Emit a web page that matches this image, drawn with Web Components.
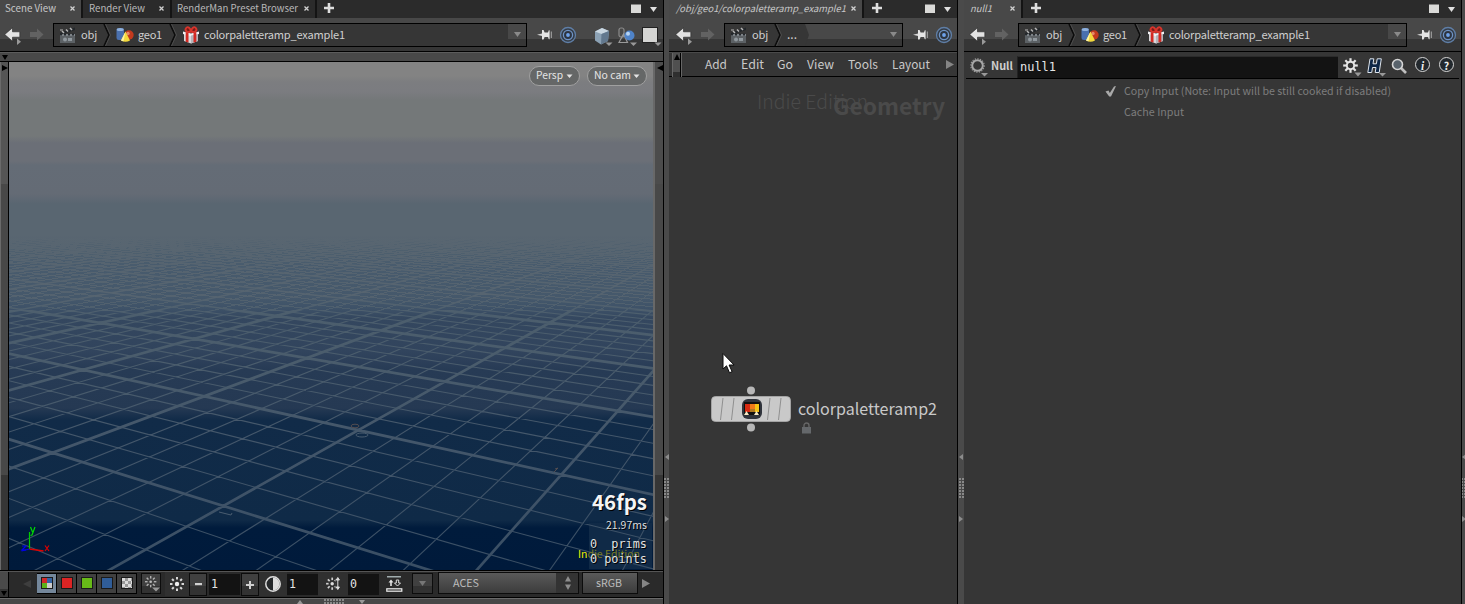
<!DOCTYPE html>
<html lang="en">
<head>
<meta charset="utf-8">
<title>Scene editor</title>
<style>
  html, body { margin: 0; height: 100%; overflow: hidden; background: #363636; }
  body { font-family: "Noto Sans CJK SC", "Noto Sans", sans-serif; color: #c6c6c6; }
</style>
</head>
<body>
<scene-desktop></scene-desktop>
<script>
function define(name, css, html, ready) {
  const t = document.createElement('template');
  t.innerHTML = '<style>:host{display:block;box-sizing:border-box}*{box-sizing:border-box}svg{display:block}' + css + '</style>' + html;
  customElements.define(name, class extends HTMLElement {
    constructor() { super(); this.attachShadow({ mode: 'open' }).appendChild(t.content.cloneNode(true)); }
    connectedCallback() { if (ready) ready(this, this.shadowRoot); }
  });
}

/* ---------- label whose type is fitted to a known width ---------- */
define('ui-label', ':host{white-space:pre;flex:none;line-height:1;display:block;padding-bottom:2px}span{display:inline-block;line-height:16px}', '<span><slot></slot></span>', (el, r) => {
  const w = +el.getAttribute('w'), x = el.getAttribute('x'), size = +(el.getAttribute('size') || 12);
  el.style.fontSize = size + 'px';
  if (x) el.style.marginLeft = x + 'px';
  if (w) {
    el.style.width = w + 'px';
    const s = r.querySelector('span'), n = el.textContent.length;
    const now = s.getBoundingClientRect().width;
    if (now > w) el.style.fontSize = Math.max(size * .85, size * w / now).toFixed(2) + 'px';
    s.style.letterSpacing = ((w - s.getBoundingClientRect().width) / n).toFixed(3) + 'px';
  }
});

/* ---------- icons ---------- */
const rays = (n, a, b, c) => Array.from({ length: n }, (_, i) => {
  const t = i * 2 * Math.PI / n;
  return `<line x1="${c + a * Math.cos(t)}" y1="${c + a * Math.sin(t)}" x2="${c + b * Math.cos(t)}" y2="${c + b * Math.sin(t)}"/>`;
}).join('');
const ICONS = {
  back: [18, 18, '<path d="M-.3 7.500 7.500.8v4h7.300v5.400H7.500v4z" fill="#e2e2e2" stroke="#222" stroke-width=".6"/><path d="M12 11.500v6.500l4-3.200z" fill="#999"/>'],
  forward: [16, 16, '<path d="M14.500 7.500 8 1.500v3.500H1v5h7v3.500z" fill="#626262"/>'],
  clap: [18, 18, '<rect x="1" y="8" width="15" height="9" fill="#5c6165"/><rect x="1" y="8" width="15" height="2" fill="#7d8388"/><path d="M1 7 16 1.500V4L1 9z" fill="#22262a"/><path d="M3 5l2 2M7 3.500l2 2M11 2l2 2" stroke="#b5b5b5" stroke-width="1.500"/><path d="M1 8.500h15" stroke="#24282c" stroke-width="2" stroke-dasharray="2 2"/><circle cx="6" cy="13.500" r="2" fill="#8f979d"/><rect x="9" y="12" width="4" height="3" fill="#8f979d"/><path d="M1 3h3v2H1z" fill="#777"/>'],
  geo: [18, 16, '<rect x=".5" y="1" width="7.500" height="12" rx="2.500" fill="#4a70ae"/><ellipse cx="4.200" cy="2.500" rx="3.500" ry="1.500" fill="#8fb0dc"/><circle cx="13" cy="8" r="4.700" fill="#c23a1e"/><circle cx="12" cy="6.500" r="1.700" fill="#e58a6a"/><path d="M9.500 4.500 14 13.500q-4.500 2.500-9 0z" fill="#f3d93c"/><path d="M9.500 4.500 7.500 14.300q-1.500 0-2.500-.8z" fill="#fff4a2"/>'],
  gift: [18, 18, '<path d="M2 7.500 9 9l7-1.500V15L9 17.500 2 15z" fill="#d9d9dc"/><path d="M1 5.500 9 7.500l8-2v2.500l-8 2.200L1 8z" fill="#f1f1f3"/><path d="M9 9.500v8l7-2.500V8z" fill="#b4b4ba"/><path d="M3.700 6.100 6.500 6.800v9.700L3.700 15.700zM11.500 6.800 14.300 6.100v9.600l-2.800.8z" fill="#d32a23"/><path d="M9 5.500C5 7 2.500 4.500 4 2.200 6-.5 8.500 2.500 9 5.500c.5-3 3-6 5-3.300 1.500 2.300-1 4.800-5 3.300z" fill="#7a1c18" stroke="#d8352c" stroke-width="1.900"/>'],
  pin: [16, 14, '<path d="M0 6.700 6 5.200v3z" fill="#d8d8d8"/><path d="M5 2h1.600L7.600 4.500H11l.8-2.300h.8v9h-.8L11 9H7.600l-1 2.500H5z" fill="#e6e6e6"/><path d="M14.300 3.500v6.500" stroke="#aaa" stroke-width="1"/>'],
  ring: [18, 18, '<circle cx="9" cy="9" r="7.500" fill="#343c46" stroke="#5f7ea6" stroke-width="1.300"/><circle cx="9" cy="9" r="4.600" fill="#2c3440" stroke="#6f93c4" stroke-width="1.300"/><circle cx="9" cy="9" r="1.900" fill="#6ea2ea"/>'],
  cube: [20, 20, '<path d="M1 4.500 8 1l7 3-1 10-7 3.500-6-4z" fill="#8ba1b4"/><path d="M1 4.500 8 1l7 3-7.500 3z" fill="#c9d6e0"/><path d="M7.500 7 15 4l-1 10-7 3.500z" fill="#62788e"/><path d="M11.500 15.500h7l-3.500 3.500z" fill="#999"/>'],
  shapes: [20, 20, '<rect x="1" y="1" width="5" height="9" rx="2" fill="none" stroke="#8b8b8b" stroke-width="1.200"/><path d="M5.500 7 9.500 15.500H1z" fill="none" stroke="#999" stroke-width="1.200"/><circle cx="11.500" cy="8.500" r="5" fill="#4f83c8"/><circle cx="10" cy="6.800" r="2" fill="#b5d3f3"/><path d="M12 15.500h7l-3.500 3.500z" fill="#999"/>'],
  square: [20, 20, '<rect x=".5" y=".5" width="15" height="15" fill="#d6d6d4" stroke="#222"/><path d="M12.500 15.500h7L16 19z" fill="#999"/>'],
  win: [10, 10, '<rect width="10" height="8.500" y=".5" fill="#dadad8"/>'],
  plus: [10, 12, '<path d="M3.700 0h2.600v3.700H10v2.600H6.300V10H3.700V6.300H0V3.700h3.700z" fill="#dedede"/>'],
  close: [5, 7, '<path d="M.5.5l4 4M4.500.5l-4 4" stroke="#d0d0d0" stroke-width="1.300"/>'],
  down: [7, 5, '<path d="M0 0h7L3.500 5z" fill="currentColor"/>'],
  caret: [7, 5, '<path d="M.5.500h6L3.500 4z" fill="currentColor"/>'],
  right: [8, 9, '<path d="M0 0v9l8-4.500z" fill="currentColor"/>'],
  left: [8, 8, '<path d="M8 0v8L0 4z" fill="currentColor"/>'],
  param: [19, 19, '<circle cx="7.500" cy="7.500" r="5.300" fill="none" stroke="#a8a8a8" stroke-width="2"/><circle cx="7.500" cy="7.500" r="6.700" fill="none" stroke="#999" stroke-width="1.200" stroke-dasharray="1.300 1.300"/><path d="M11 15h7l-3.500 3.500z" fill="#999"/>'],
  cog: [19, 19, `<g stroke="#e6e6e6" stroke-width="2.200">${rays(8, 3.500, 7.300, 7.500)}</g><circle cx="7.500" cy="7.500" r="3.700" fill="none" stroke="#e6e6e6" stroke-width="2"/><path d="M11.500 14.500h7L15 18.500z" fill="#999"/>`],
  hou: [19, 19, '<path d="M3 .8H6.800L6 5.800h3.400l.8-5H14.300L12.200 14.500H8.200l.8-5H5.500l-.8 5H.8z" fill="#0d2646" stroke="#dfe6ee" stroke-width="1"/><path d="M12 15h7l-3.500 3.500z" fill="#999"/>'],
  mag: [17, 17, '<path d="M10 10l5 5" stroke="#bfbfbf" stroke-width="2.600"/><circle cx="6.500" cy="6.500" r="5" fill="#59636c" stroke="#d6d6d6" stroke-width="1.600"/>'],
  sun: [16, 16, `<g stroke="#d8d8d8" stroke-width="2">${rays(8, 4.500, 7, 8)}</g><circle cx="8" cy="8" r="2.200" fill="#eee"/>`],
  light: [16, 18, `<g stroke="#b2b2b2" stroke-width="1.600" transform="translate(-.5 -.5) scale(.9)">${rays(8, 3.500, 6.300, 8)}</g><circle cx="6.700" cy="6.700" r="1.300" fill="#bbb"/><path d="M8 12.500h8l-4 4z" fill="#999"/>`],
  contrast: [18, 18, '<circle cx="9" cy="9" r="7.200" fill="#25282a" stroke="#dedede" stroke-width="1.500"/><path d="M9 2.500a6.500 6.500 0 010 13z" fill="#dedede"/>'],
  gamma: [16, 16, `<g stroke="#d0d0d0" stroke-width="1.900" transform="translate(0 .5) scale(.9)">${rays(8, 4, 6.800, 8)}</g><circle cx="7.200" cy="7.700" r="1.700" fill="#ddd"/><path d="M10.500 0h6v16h-6z" fill="#303030"/><path d="M12.800 3v9M11.200 4l1.600-2.500L14.400 4zM11.200 11l1.600 2.500 1.600-2.500z" stroke="#ddd" stroke-width="1" fill="#ddd"/>`],
  fit: [17, 16, '<path d="M1 .8h14" stroke="#bfcdd0" stroke-width="1.200"/><path d="M4.200 10V6.500H2.500L5 3.500l2.500 3H5.800V10z" fill="#e4e4e4"/><path d="M10.300 4h2.400v3h1.800l-3 3-3-3h1.800z" fill="none" stroke="#ddd" stroke-width="1"/><rect x=".8" y="12.800" width="15" height="2.400" fill="#333" stroke="#eee" stroke-width="1.200"/>'],
  minus: [7, 3, '<path d="M0 0h7v2.200H0z" fill="#d0d0d0"/>'],
  add: [8, 8, '<path d="M3 0h2v3h3v2H5v3H3V5H0V3h3z" fill="#d0d0d0"/>'],
  updown: [8, 14, '<path d="M1 5.500h6L4 0zM1 8.500h6L4 14z" fill="#8d8d8d"/>'],
  check: [12, 14, '<path d="M.5 6.500 3.500 5.500 4.800 8 9 1.500l2-.5L6 11.500H4.200z" fill="#a9a9a9"/>'],
  chev: [8, 22, '<path d="M1 0 6 11 1 22" fill="none" stroke="#0c0c0c" stroke-width="1.600"/><path d="M2.500 0 7.500 11 2.500 22" fill="none" stroke="#4c4c4c" stroke-width="1"/>']
};
define('ui-icon', ':host{flex:none}', '', (el, r) => {
  const [w, h, s] = ICONS[el.getAttribute('name')];
  const x = el.getAttribute('x'), y = el.getAttribute('y');
  if (x) el.style.marginLeft = x + 'px';
  if (y) el.style.marginTop = y + 'px';
  el.style.width = w + 'px'; el.style.height = h + 'px';
  const b = document.createElement('div');
  b.innerHTML = `<svg width="${w}" height="${h}" viewBox="0 0 ${w} ${h}" overflow="visible">${s}</svg>`;
  r.appendChild(b);
});

/* ---------- tabs ---------- */
define('pane-tabs', ':host{display:flex;align-items:center;height:18px;background:#2b2b2b}.end{margin-left:auto;display:flex;align-items:center;padding:0 6px 0 0;gap:9px;color:#e0e0e0}',
  '<slot></slot><div class="end"><ui-icon name="win"></ui-icon><ui-icon name="down"></ui-icon></div>');
define('pane-tab', `:host{display:flex;align-items:center;height:18px;border-right:2px solid #141414;padding-right:6px;color:#b9b9b9;flex:none}
  :host([active]){background:#484848;color:#c8c8c8}ui-icon{margin-left:auto}`,
  '<slot></slot><ui-icon name="close"></ui-icon>', el => { el.style.width = el.getAttribute('w') + 'px'; });

/* ---------- network path bar ---------- */
define('path-bar', `:host{display:flex;height:34px;background:linear-gradient(#484848 21px,#363636 21px);border-bottom:1px solid #000;flex:none}
  .box{border:1px solid #000;height:24px;margin-top:5px;display:flex;align-items:center;background:linear-gradient(#484848 15px,#363636 15px);flex:none;color:#cfcfcf}
  .segs{display:flex;align-items:center;background:#363636;height:22px}
  :host([short]) .segs{clip-path:polygon(0 0,calc(100% - 4px) 0,100% 50%,calc(100% - 4px) 100%,0 100%)}
  .dd{width:18px;height:22px;margin-left:auto;display:grid;place-items:center;color:#8a8a8a;padding-bottom:1px}`,
  '<ui-icon name="back" id="b" y="9"></ui-icon><ui-icon name="forward" x="6" y="9"></ui-icon><div class="box"><div class="segs"><slot></slot></div><div class="dd"><ui-icon name="down"></ui-icon></div></div><ui-icon name="pin" x="10" y="10"></ui-icon><ui-icon name="ring" x="6" y="8"></ui-icon><slot name="tools"></slot>',
  (el, r) => {
    const s = +el.getAttribute('start');
    r.querySelector('#b').style.marginLeft = s + 'px';
    const box = r.querySelector('.box');
    box.style.width = el.getAttribute('box') + 'px'; box.style.marginLeft = '8px';
    r.querySelector('.segs').style.width = el.getAttribute('segs') + 'px';
  });

/* ---------- splitter ---------- */
define('pane-splitter', `:host{border-left:1px solid #000;background:#4a4a4a;display:flex;flex-direction:column;align-items:center;padding-top:454px;overflow:hidden}
  .dots{width:5px;height:21px;margin:18px 0 17px;background:radial-gradient(circle at 1px 1px,#8a8a8a .7px,transparent 1px) 0 0/3px 3px;flex:none}svg{flex:none}`,
  '<svg width="4" height="6"><path d="M4 0v6L0 3z" fill="#8c8c8c"/></svg><div class="dots"></div><svg width="4" height="6"><path d="M0 0v6l4-3z" fill="#8c8c8c"/></svg>');

/* ---------- perspective construction plane ---------- */
function solve(A, b) {
  const n = b.length;
  for (let i = 0; i < n; i++) {
    let p = i; for (let k = i + 1; k < n; k++) if (Math.abs(A[k][i]) > Math.abs(A[p][i])) p = k;
    [A[i], A[p]] = [A[p], A[i]]; [b[i], b[p]] = [b[p], b[i]];
    for (let k = i + 1; k < n; k++) { const f = A[k][i] / A[i][i]; for (let j = i; j < n; j++) A[k][j] -= f * A[i][j]; b[k] -= f * b[i]; }
  }
  const x = Array(n).fill(0);
  for (let i = n - 1; i >= 0; i--) { let s = b[i]; for (let j = i + 1; j < n; j++) s -= A[i][j] * x[j]; x[i] = s / A[i][i]; }
  return x;
}
/* grid unit -> viewport pixel correspondences */
const NODES = [[0, 0, 350.3, 368], [1, 0, 552, 413], [-1, 0, 194.3, 334], [-2, 0, 74.3, 308], [0, -1, 214.3, 444], [-1, -1, 43.7, 390.7], [0, 1, 436, 319.7], [1, 1, 608.7, 348.7]];
function planeLines() {
  const N = Array.from({ length: 8 }, () => Array(8).fill(0)), v = Array(8).fill(0);
  for (const [x, y, X, Y] of NODES)
    for (const [row, t] of [[[x, y, 1, 0, 0, 0, -x * X, -y * X], X], [[0, 0, 0, x, y, 1, -x * Y, -y * Y], Y]])
      for (let i = 0; i < 8; i++) { v[i] += row[i] * t; for (let j = 0; j < 8; j++) N[i][j] += row[i] * row[j]; }
  const h = solve(N, v);
  const P = (x, y) => [h[0] * x + h[1] * y + h[2], h[3] * x + h[4] * y + h[5], h[6] * x + h[7] * y + 1];
  let minor = '', major = '';
  const seg = (a, b) => {
    const e = .02;
    if (a[2] < e && b[2] < e) return '';
    const cut = (p, q) => { const t = (e - p[2]) / (q[2] - p[2]); return p.map((c, i) => c + t * (q[i] - c)); };
    if (a[2] < e) a = cut(a, b); if (b[2] < e) b = cut(b, a);
    return `M${(a[0] / a[2]).toFixed(1)} ${(a[1] / a[2]).toFixed(1)}L${(b[0] / b[2]).toFixed(1)} ${(b[1] / b[2]).toFixed(1)}`;
  };
  const R = 22;
  for (let i = -R * 5; i <= R * 5; i++) {
    const c = i / 5, d = seg(P(c, -R), P(c, R)) + seg(P(-R, c), P(R, c));
    if (i % 5) minor += d; else major += d;
  }
  return [minor, major];
}
define('scene-viewport', `:host{position:relative;flex:1;overflow:hidden;height:508px;color:#eee;
    background:linear-gradient(#838383 0,#838383 14px,#7c7d80 20px,#7b7c80 30px,#747879 38px,#747879 74px,#6b6f77 81px,#6b6f77 99px,#646c76 103px,#646b75 132px,#596671 142px,#596671 174px,#4f606e 186px,#485b6d 205px,#45586b 236px,#3e5268 246px,#34475f 256px,#31445d 290px,#273b55 308px,#253953 346px,#112b48 358px,#0f2a47 458px,#001b3c 466px,#001a3b 100%)}
  .plane{position:absolute;inset:0}
  .shade{position:absolute;right:1px;bottom:1px;width:63px;height:46px;background:#102a47}
  .pills{position:absolute;right:6px;top:4px;display:flex;gap:7px}
  .pill{height:20px;border:1.500px solid #a0a0a0;border-radius:10px;background:#656767;display:flex;align-items:center;color:#e4e4e4;justify-content:space-between;padding:0 6px 0 6px}
  .hud{position:absolute;right:6px;bottom:3px;display:flex;flex-direction:column;align-items:flex-end;text-shadow:1px 1px 0 #000}
  .hud ui-label,.mark ui-label{padding-bottom:0}
  .fps{font-weight:700;color:#f4f4f4;margin-bottom:6px}.ms{margin-bottom:4px;color:#ddd}
  .mono{font-family:"DejaVu Sans Mono",monospace;color:#e2e2e2;margin-top:-1px}
  .mark{position:absolute;left:569px;bottom:8px;color:#7b7c20}.mark b{font-weight:400;color:#f0f000}`,
  `<div class="shade"></div><svg class="plane" width="645" height="508"></svg>
  <div class="pills"><div class="pill" style="width:51px"><ui-label w="27" size="12">Persp</ui-label><ui-icon name="caret"></ui-icon></div><div class="pill" style="width:60px"><ui-label w="37" size="12">No cam</ui-label><ui-icon name="caret"></ui-icon></div></div>
  <div class="mark"><ui-label w="62" size="11"><b>In</b>die Edition</ui-label></div>
  <div class="hud"><ui-label class="fps" w="55" size="22">46fps</ui-label><ui-label class="ms" w="41" size="12">21.97ms</ui-label>
  <ui-label class="mono" w="57" size="12">0  prims</ui-label><ui-label class="mono" w="57" size="12">0 points</ui-label></div>`,
  (el, r) => {
    const [minor, major] = planeLines();
    r.querySelector('.plane').innerHTML = `<defs><linearGradient id="g" x1="0" y1="0" x2="0" y2="508" gradientUnits="userSpaceOnUse"><stop offset=".33" stop-color="#596671"/><stop offset=".46" stop-color="#566470"/><stop offset=".5" stop-color="#4c5e6d"/><stop offset=".6" stop-color="#4a5c6c"/><stop offset=".75" stop-color="#43566a"/><stop offset="1" stop-color="#394e64"/></linearGradient>
      <clipPath id="far"><path d="M0 176h645v72H0z"/></clipPath><clipPath id="near"><path d="M0 248h645v260H0z"/></clipPath></defs>
      <g fill="none" stroke="url(#g)"><g clip-path="url(#far)" shape-rendering="crispEdges"><path d="${minor}" stroke-width=".9"/></g><g clip-path="url(#near)"><path d="${minor}" stroke-width="1.100"/></g><g clip-path="url(#far)"><path d="${major}" stroke-width="1.500"/></g><g clip-path="url(#near)"><path d="${major}" stroke-width="2.700"/></g></g>
      <g fill="none" stroke="#514c50"><ellipse cx="346" cy="364" rx="4" ry="1.800"/><path d="M545 410l4-4-3 1"/></g>
      <g fill="none" stroke="#4a5d70"><ellipse cx="353" cy="373" rx="6" ry="2"/><path d="M210 450l12 3 1-2M215 452"/></g>
      <g fill="none" stroke-width="1.200"><path d="M20.500 487v-17" stroke="#0c0"/><path d="M20.500 487l14 2" stroke="#d00" stroke-width="1.700"/><path d="M20.500 487l-8 2" stroke="#00e"/>
      <path d="M21.500 465l2 5M26 465l-3 8-1.500.5" stroke="#0d0"/><path d="M36 483.500l4 5.500M40 483.500l-4 5.500" stroke="#d00"/><path d="M13 484h4l-4 4h4" stroke="#00e"/></g>`;
  });

/* ---------- viewport frame with stow bars ---------- */
define('viewport-frame', `:host{display:flex;flex-direction:column;height:519px}
  .top{height:10px;background:#484848;border-top:1px solid #5c5c5c;border-bottom:1px solid #000;padding:2px 0 0 2px;color:#000}
  .row{display:flex;height:509px;border-bottom:1px solid #000}
  .bar{width:9px;flex:none;background:linear-gradient(#555 122px,#484848 122px,#484848 413px,#363636 413px);color:#000;padding-top:3px}
  .l{border-right:1px solid #000;border-left:1px solid #6a6a6a;padding-left:1px}.r{width:10px;border-left:2px solid #686868;padding-left:2px;background:linear-gradient(#4c4c4c 122px,#484848 122px,#484848 413px,#363636 413px)}`,
  '<div class="top"><svg width="6" height="5"><path d="M0 0h6L3 5z"/></svg></div><div class="row"><div class="bar l"><svg width="6" height="6"><path d="M0 0v6l6-3z"/></svg></div><slot></slot><div class="bar r"><svg width="6" height="6"><path d="M6 0v6L0 3z"/></svg></div></div>');

/* ---------- display options bar ---------- */
define('display-bar', `:host{display:flex;height:27px;background:#2a2a2a;border-bottom:1px solid #000;border-top:1px solid #555}
  .stow{width:9px;border-right:1px solid #000;background:linear-gradient(#4a4a4a 17px,#333 17px);display:flex;align-items:flex-end;padding:0 0 1px 1px;flex:none}
  .ch{display:flex;height:21px;margin:1px 0 0 6px;border:1px solid #000;border-left:0}
  .c{width:20px;display:grid;place-items:center;background:#404040;border-right:1px solid #000;padding-bottom:1px}.c:last-child{border:0;width:19px}
  .c.on{background:#74879b}.c i{width:12px;height:12px;border:1px solid #1a1a1a}
  .b{border:1px solid #0c0c0c;background:linear-gradient(#404040 12px,#323232 12px);display:grid;place-items:center;flex:none}
  .f{width:31px;height:21px;background:#131313;margin-top:2px;display:flex;align-items:center;padding:1px 0 0 2px;font-family:"DejaVu Sans Mono",monospace;color:#e4e4e4;flex:none}
  .i{width:29px;display:grid;place-items:center;background:#303030;height:24px;flex:none}
  .combo{display:flex;width:141px;height:22px;margin:0 0 0 5px;border:1px solid #0c0c0c;background:#333;flex:none}
  .face{background:linear-gradient(#5a5a5a,#3c3c3c);color:#bdbdbd;display:flex;align-items:center;padding-top:1px}`,
  `<div class="stow"><svg width="6" height="5"><path d="M0 0h6L3 5z"/></svg></div>
  <ui-icon name="left" x="14" y="8" style="color:#3e3e3e"></ui-icon>
  <div class="ch"><div class="c on"><i style="background:conic-gradient(#3564a3 25%,#ccc 0 50%,#5cb219 0 75%,#d02828 0)"></i></div><div class="c"><i style="background:#dc2424"></i></div><div class="c"><i style="background:#67ba18"></i></div><div class="c"><i style="background:#305d98"></i></div><div class="c"><i style="background:repeating-conic-gradient(#999 0 25%,#ddd 0 50%) 0 0/6px 6px"></i></div></div>
  <div class="b" style="width:20px;height:21px;margin:1px 0 0 4px"><ui-icon name="light" x="2" y="1"></ui-icon></div>
  <div class="i" style="margin-left:4px;width:24px"><ui-icon name="sun"></ui-icon></div>
  <div class="b" style="width:18px;height:23px;margin:1px 0 0 0"><ui-icon name="minus"></ui-icon></div>
  <div class="f" style="margin-left:2px"><ui-label w="7" size="12">1</ui-label></div>
  <div class="b" style="width:18px;height:23px;margin:1px 0 0 1px"><ui-icon name="add"></ui-icon></div>
  <div class="i" style="width:28px"><ui-icon name="contrast"></ui-icon></div>
  <div class="f"><ui-label w="7" size="12">1</ui-label></div>
  <div class="i" style="width:30px"><ui-icon name="gamma"></ui-icon></div>
  <div class="f"><ui-label w="7" size="12">0</ui-label></div>
  <div class="i" style="width:31px;background:none"><ui-icon name="fit"></ui-icon></div>
  <div class="b" style="width:21px;height:21px;margin:1px 0 0 2px;color:#777"><ui-icon name="down"></ui-icon></div>
  <div class="combo"><div class="face" style="width:117px"><ui-label x="14" w="26" size="12">ACES</ui-label></div><ui-icon name="updown" x="8" y="3"></ui-icon></div>
  <div class="combo face" style="width:56px;margin-left:3px"><ui-label x="13" w="26" size="12">sRGB</ui-label></div>
  <ui-icon name="right" x="4" y="7" style="color:#858585"></ui-icon>`);
define('bottom-stow', ':host{height:6px;background:#484848;border-top:1px solid #6a6a6a;display:flex;padding-left:297px;align-items:center}.d{width:21px;height:5px;margin:0 14px 0 21px;background:radial-gradient(circle at 1px 1px,#8a8a8a .7px,transparent 1px) 0 0/3px 3px}',
  '<svg width="6" height="4"><path d="M0 4h6L3 0z" fill="#999"/></svg><div class="d"></div><svg width="6" height="4"><path d="M0 0h6L3 4z" fill="#999"/></svg>');

/* ---------- network editor ---------- */
define('network-menu', `:host{display:flex;align-items:center;height:25px;border-bottom:1px solid #000;border-top:1px solid #4a4a4a;padding-left:3px;color:#c9c9c9}
  .s{width:9px;height:24px;background:linear-gradient(#505050 19px,#2f2f2f 19px);border-right:1px solid #000;border-left:1px solid #666;flex:none;padding:1px 0 0 1px}.e{width:1px;height:24px;background:#666}`,
  '<div class="s"><svg width="6" height="6"><path d="M0 6h6L3 0z"/></svg></div><div class="e"></div><slot></slot><ui-icon name="right" x="16" style="color:#858585"></ui-icon>');
define('network-canvas', `:host{position:relative;flex:1;overflow:hidden}
  .m{position:absolute;line-height:1}.node{position:absolute;left:42px;top:308px}`,
  `<div class="m" style="left:88px;top:14px;color:#4a4a4a;font-weight:300"><ui-label w="111" size="20.500">Indie Edition</ui-label></div>
  <div class="m" style="left:164px;top:17px;color:#4a4a4a;font-weight:700"><ui-label w="112" size="23">Geometry</ui-label></div>
  <svg class="m" style="left:53px;top:275px" width="14" height="24"><path d="M1 1.500v15.500l3.500-3.200 3 7 2.600-1.200-3-6.600h5z" fill="#fff" stroke="#0a0a0a"/></svg>
  <svg class="node" width="82" height="52"><circle cx="40" cy="5.500" r="4" fill="#b8b8b8"/><circle cx="40" cy="42.500" r="4" fill="#b8b8b8"/><rect x=".5" y="11.500" width="79" height="25" rx="4" fill="#c9c9c9" stroke="#adadad" stroke-width=".8"/>
  <path d="M12 13 9.500 35M23 13 20.500 35M59 13 56.500 35M70 13 67.500 35" stroke="#8f8f8f" fill="none"/>
  <rect x="31" y="14" width="20" height="20" rx="6" fill="#30343c"/><rect x="33" y="17" width="16" height="13" fill="#111"/><rect x="34" y="19" width="5" height="8" fill="#d62a12"/><rect x="39" y="19" width="5" height="5" fill="#f07a18"/><rect x="44" y="19" width="4" height="8" fill="#f5c316"/><rect x="39" y="24" width="5" height="3" fill="#b07820"/><path d="M33 30l2.500-4 2.500 4zM43 30l2.500-4 2.500 4z" fill="#f6e9c4"/></svg>
  <div class="m" style="left:129px;top:323px;color:#c9c9c9"><ui-label w="139" size="17.500">colorpaletteramp2</ui-label></div>
  <svg class="m" style="left:132px;top:345px" width="11" height="12"><path d="M3 6V3.500a2.500 2.500 0 015 0V6" fill="none" stroke="#666" stroke-width="1.400"/><rect x="1" y="5" width="9" height="6.500" fill="#65686b"/></svg>`);

/* ---------- parameter pane ---------- */
define('param-head', `:host{display:flex;height:27px;margin:0 2px;border-bottom:1px solid #000}
  .f{width:321px;height:22px;margin:4px 0 0 4px;background:#131313;border-top:1px solid #2b2b2b;border-left:1px solid #222;display:flex;align-items:center;padding-left:2px;color:#e6e6e6;font-family:"DejaVu Sans Mono",monospace}
  .q{width:15px;height:15px;border:1.500px solid #d6d6d6;border-radius:50%;background:#22282d;color:#eee;font-weight:700;display:grid;place-items:center;margin-top:5px;flex:none}.q ui-label{padding:0}`,
  `<ui-icon name="param" x="4" y="6"></ui-icon><ui-label x="2" w="22" size="12" style="font-weight:700;margin-top:5px;color:#cfcfcf">Null</ui-label>
  <div class="f"><ui-label w="36" size="13">null1</ui-label></div>
  <ui-icon name="cog" x="5" y="6"></ui-icon><ui-icon name="hou" x="5" y="6"></ui-icon><ui-icon name="mag" x="5" y="6"></ui-icon>
  <div class="q" style="margin-left:7px"><ui-label size="11.500" style="font-style:italic;font-family:'Liberation Serif',serif">i</ui-label></div><div class="q" style="margin-left:9px"><ui-label size="10.500">?</ui-label></div>`);
define('param-rows', ':host{display:grid;grid-template-columns:160px auto;padding-top:2px;grid-auto-rows:21px;align-items:center;color:#7d7d7d}ui-icon{justify-self:end;margin-right:7px}',
  '<ui-icon name="check"></ui-icon><ui-label w="267" size="12">Copy Input (Note: Input will be still cooked if disabled)</ui-label><span></span><ui-label w="60" size="12">Cache Input</ui-label>');

define('scene-desktop', `:host{display:grid;grid-template-columns:663px 6px 288px 7px 497px 4px;height:604px;background:#363636;overflow:hidden}
  section{display:flex;flex-direction:column;min-width:0;height:604px}`,
  `<section>
    <pane-tabs><pane-tab active w="83"><ui-label x="5" w="51" size="11">Scene View</ui-label></pane-tab><pane-tab w="89"><ui-label x="6" w="56" size="11">Render View</ui-label></pane-tab><pane-tab w="145"><ui-label x="5" w="121" size="11">RenderMan Preset Browser</ui-label></pane-tab><ui-icon name="plus" x="7"></ui-icon></pane-tabs>
    <path-bar start="5" box="474" segs="454"><ui-icon name="clap" x="5"></ui-icon><ui-label x="4" w="16" size="13">obj</ui-label><ui-icon name="chev" x="6"></ui-icon><ui-icon name="geo" x="5"></ui-icon><ui-label x="4" w="24" size="13">geo1</ui-label><ui-icon name="chev" x="7"></ui-icon><ui-icon name="gift" x="5"></ui-icon><ui-label x="4" w="141" size="13">colorpaletteramp_example1</ui-label>
      <ui-icon slot="tools" name="cube" x="17" y="9"></ui-icon><ui-icon slot="tools" name="shapes" x="4" y="9"></ui-icon><ui-icon slot="tools" name="square" x="4" y="9"></ui-icon></path-bar>
    <viewport-frame><scene-viewport></scene-viewport></viewport-frame>
    <display-bar></display-bar><bottom-stow></bottom-stow>
  </section>
  <pane-splitter></pane-splitter>
  <section>
    <pane-tabs><pane-tab active w="195"><ui-label x="7" w="170" size="11" style="font-style:italic">/obj/geo1/colorpaletteramp_example1</ui-label></pane-tab><ui-icon name="plus" x="8"></ui-icon></pane-tabs>
    <path-bar short start="7" box="179" segs="84"><ui-icon name="clap" x="5"></ui-icon><ui-label x="4" w="16" size="13">obj</ui-label><ui-icon name="chev" x="6"></ui-icon><ui-label x="5" w="10" size="13">...</ui-label></path-bar>
    <network-menu><ui-label x="23" w="22" size="13">Add</ui-label><ui-label x="14" w="23" size="13">Edit</ui-label><ui-label x="13" w="16" size="13">Go</ui-label><ui-label x="14" w="27" size="13">View</ui-label><ui-label x="14" w="30" size="13">Tools</ui-label><ui-label x="14" w="38" size="13">Layout</ui-label></network-menu>
    <network-canvas></network-canvas>
  </section>
  <pane-splitter></pane-splitter>
  <section>
    <pane-tabs><pane-tab active w="59"><ui-label x="6" w="22" size="11" style="font-style:italic">null1</ui-label></pane-tab><ui-icon name="plus" x="8"></ui-icon></pane-tabs>
    <path-bar start="6" box="389" segs="369"><ui-icon name="clap" x="5"></ui-icon><ui-label x="4" w="16" size="13">obj</ui-label><ui-icon name="chev" x="6"></ui-icon><ui-icon name="geo" x="5"></ui-icon><ui-label x="4" w="24" size="13">geo1</ui-label><ui-icon name="chev" x="7"></ui-icon><ui-icon name="gift" x="5"></ui-icon><ui-label x="4" w="141" size="13">colorpaletteramp_example1</ui-label></path-bar>
    <param-head></param-head><param-rows></param-rows>
  </section>
  <pane-splitter></pane-splitter>`);
</script>
</body>
</html>
